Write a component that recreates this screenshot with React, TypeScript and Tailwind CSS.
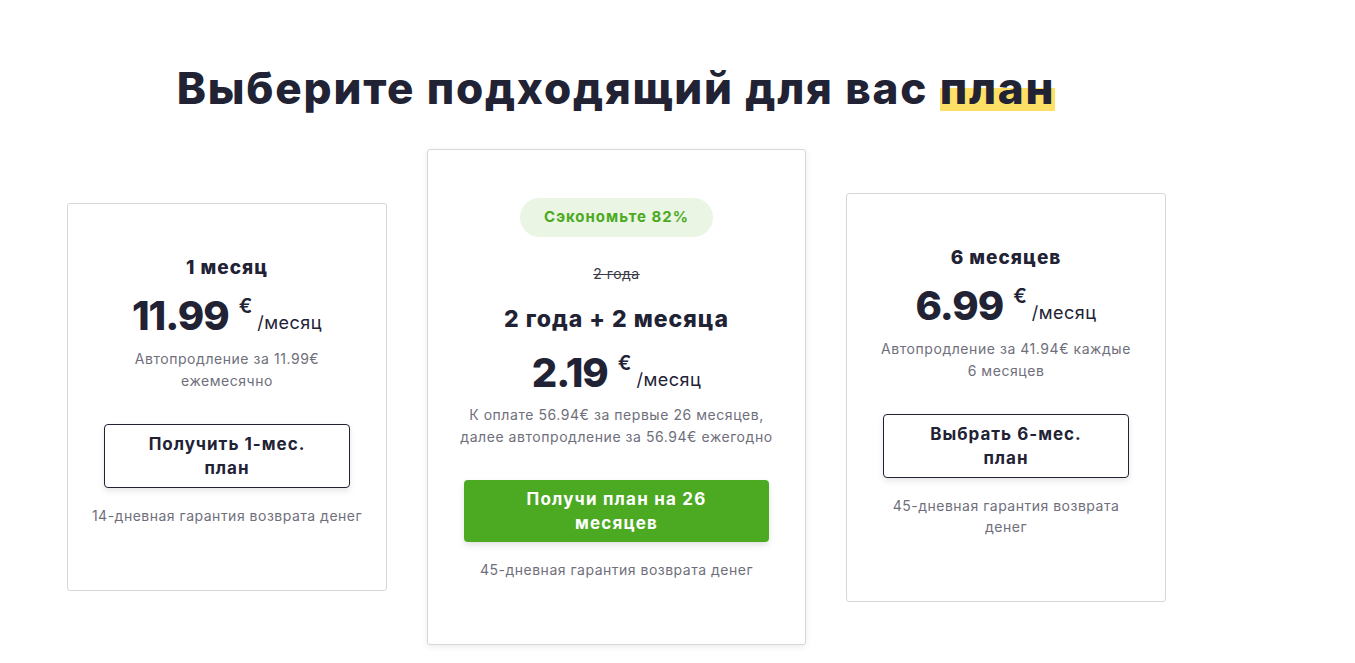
const font = { fontFamily: 'Inter, "Noto Sans", sans-serif' }

type Plan = {
  title: string
  price: string
  note: React.ReactNode
  button: string
  guarantee: React.ReactNode
  featured?: boolean
}

const PlanCard = ({ plan }: { plan: Plan }) => {
  const { featured } = plan
  return (
    <div
      className={
        featured
          ? 'w-[379px] h-[496px] bg-white border border-[#d6d6dc] rounded-[3px] shadow-[0_2px_6px_rgba(0,0,0,0.08)] flex flex-col items-center px-9 pt-12'
          : 'w-[320px] bg-white border border-[#d6d6dc] rounded-[3px] flex flex-col items-center px-9 pt-[51px]'
      }
    >
      {featured && (
        <>
          <div className="h-[39px] px-6 rounded-full bg-[#eaf5e4] text-[#4caa22] text-[15px] font-bold tracking-[1px] flex items-center">
            Сэкономьте 82%
          </div>
          <div className="mt-[27px] text-[14px] leading-[20px] tracking-[0.5px] text-[#3a3a48] line-through">2 года</div>
        </>
      )}
      <div
        className={
          featured
            ? 'mt-[20px] text-[23px] leading-[30px] font-extrabold tracking-[1px] text-[#222235]'
            : 'text-[19px] leading-[26px] font-extrabold tracking-[1px] text-[#222235]'
        }
      >
        {plan.title}
      </div>
      <div className={(featured ? 'mt-[15px]' : 'mt-[11px]') + ' flex items-start text-[#222235]'}>
        <span className="text-[40px] leading-[48px] font-extrabold tracking-[-1px]">{plan.price}</span>
        <span className="ml-[10px] mt-[2px] text-[20px] leading-[24px] font-semibold">€</span>
        <span className="ml-[5px] mt-[18px] text-[18px] leading-[26px] font-normal tracking-[0.5px]">/месяц</span>
      </div>
      <div
        className={
          (featured ? 'mt-[7px]' : 'mt-[8px]') +
          ' text-[14px] leading-[22px] tracking-[0.55px] text-[#6f6f7c] text-center whitespace-nowrap'
        }
      >
        {plan.note}
      </div>
      {featured ? (
        <button className="mt-[32px] w-full h-[63px] rounded-[4px] bg-[#4caa22] text-white text-[17px] leading-[24px] font-bold tracking-[1.2px] px-10 shadow-[0_3px_6px_rgba(0,0,0,0.12)]">
          {plan.button}
        </button>
      ) : (
        <button className="mt-[32px] w-full h-[64px] rounded-[4px] border border-[#222235] bg-white text-[#222235] text-[17px] leading-[24px] font-bold tracking-[1px] px-10 shadow-[0_3px_6px_rgba(0,0,0,0.1)]">
          {plan.button}
        </button>
      )}
      <div className="mt-[17px] mb-[64px] text-[14px] leading-[21px] tracking-[0.5px] text-[#6f6f7c] text-center whitespace-nowrap">
        {plan.guarantee}
      </div>
    </div>
  )
}

export default function App() {
  const plans: Plan[] = [
    {
      title: '1 месяц',
      price: '11.99',
      note: (
        <>
          Автопродление за 11.99€
          <br />
          ежемесячно
        </>
      ),
      button: 'Получить 1-мес. план',
      guarantee: '14-дневная гарантия возврата денег',
    },
    {
      title: '2 года + 2 месяца',
      price: '2.19',
      note: (
        <>
          К оплате 56.94€ за первые 26 месяцев,
          <br />
          далее автопродление за 56.94€ ежегодно
        </>
      ),
      button: 'Получи план на 26 месяцев',
      guarantee: '45-дневная гарантия возврата денег',
      featured: true,
    },
    {
      title: '6 месяцев',
      price: '6.99',
      note: (
        <>
          Автопродление за 41.94€ каждые
          <br />
          6 месяцев
        </>
      ),
      button: 'Выбрать 6-мес. план',
      guarantee: (
        <>
          45-дневная гарантия возврата
          <br />
          денег
        </>
      ),
    },
  ]

  return (
    <div className="min-h-[663px] bg-white" style={font}>
      <div className="w-[1098px] ml-[67px] pt-[58px]">
        <h1 className="text-center text-[44px] leading-[60px] font-extrabold text-[#222235] tracking-[1.8px]">
          Выберите подходящий для вас{' '}
          <span className="bg-[linear-gradient(to_bottom,transparent_50%,#ffe066_50%,#ffe066_92%,transparent_92%)]">план</span>
        </h1>
        <div className="mt-[31px] flex items-center gap-10">
          {plans.map((p) => (
            <PlanCard key={p.title} plan={p} />
          ))}
        </div>
      </div>
    </div>
  )
}
